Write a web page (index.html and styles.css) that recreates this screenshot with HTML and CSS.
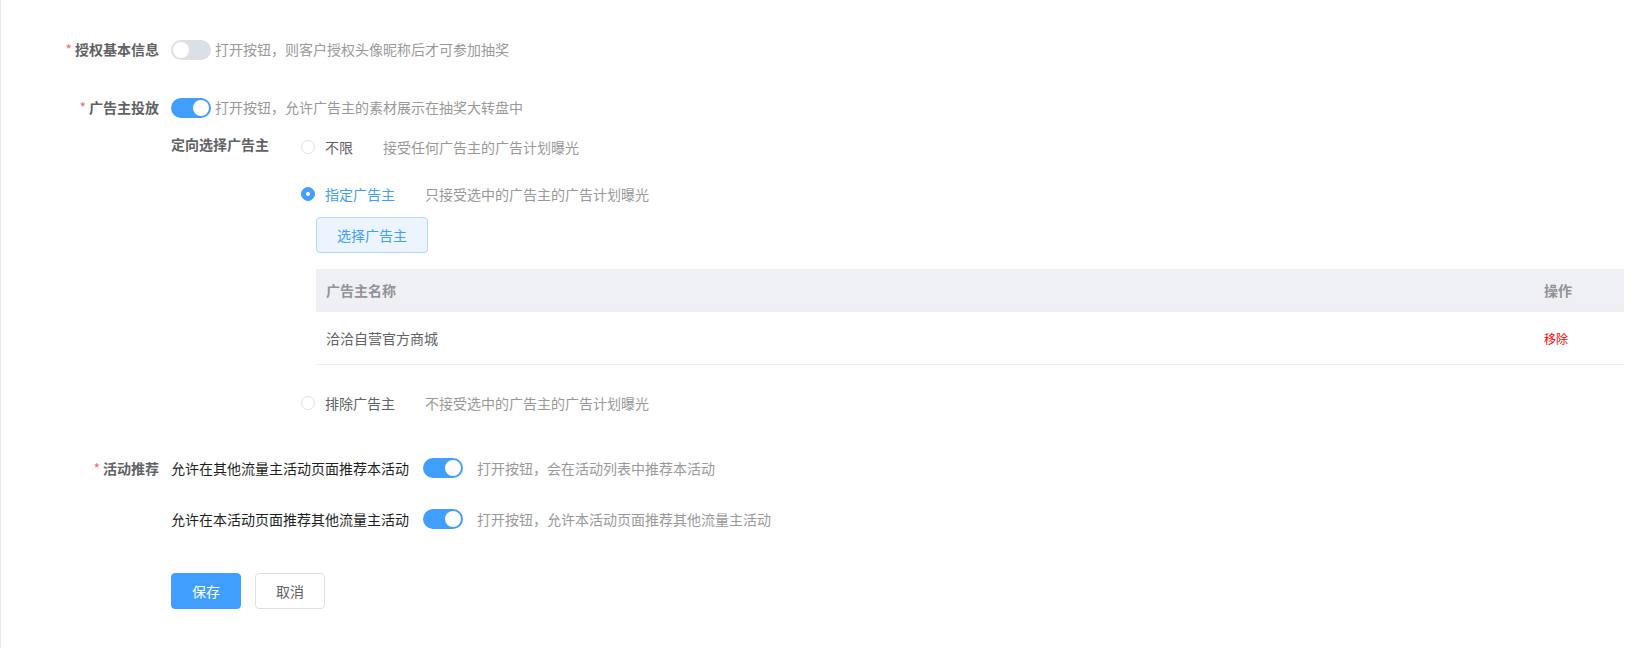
FILE: index.html
```html
<!DOCTYPE html>
<html>
<head>
  <title>活动设置</title>
  <link rel="stylesheet" href="styles.css">
</head>
<body>
  <div class="page">
    <!-- 授权基本信息 -->
    <div class="form-item first">
      <div class="form-label"><span class="required">*</span>授权基本信息</div>
      <div class="form-content">
        <span class="switch"></span><span class="tip tip-near">打开按钮，则客户授权头像昵称后才可参加抽奖</span>
      </div>
    </div>

    <!-- 广告主投放 -->
    <div class="form-item">
      <div class="form-label"><span class="required">*</span>广告主投放</div>
      <div class="form-content">
        <div class="line">
          <span class="switch on"></span><span class="tip tip-near">打开按钮，允许广告主的素材展示在抽奖大转盘中</span>
        </div>
        <div class="sub-item">
          <div class="sub-label">定向选择广告主</div>
          <div class="radio-group">
            <div class="radio-row">
              <span class="radio"></span>
              <span class="radio-text">不限</span>
              <span class="tip tip-far">接受任何广告主的广告计划曝光</span>
            </div>
            <div class="radio-row">
              <span class="radio checked"></span>
              <span class="radio-text active">指定广告主</span>
              <span class="tip tip-far">只接受选中的广告主的广告计划曝光</span>
            </div>
            <div class="picked">
              <button class="btn btn-plain">选择广告主</button>
              <table class="table">
                <thead>
                  <tr>
                    <th>广告主名称</th>
                    <th class="col-action">操作</th>
                  </tr>
                </thead>
                <tbody>
                  <tr>
                    <td>洽洽自营官方商城</td>
                    <td class="col-action"><a class="link-danger">移除</a></td>
                  </tr>
                </tbody>
              </table>
            </div>
            <div class="radio-row last">
              <span class="radio"></span>
              <span class="radio-text">排除广告主</span>
              <span class="tip tip-far">不接受选中的广告主的广告计划曝光</span>
            </div>
          </div>
        </div>
      </div>
    </div>

    <!-- 活动推荐 -->
    <div class="form-item recommend">
      <div class="form-label"><span class="required">*</span>活动推荐</div>
      <div class="form-content">
        <div class="rec-row">
          <span class="rec-text">允许在其他流量主活动页面推荐本活动</span>
          <span class="switch on"></span>
          <span class="tip tip-mid">打开按钮，会在活动列表中推荐本活动</span>
        </div>
        <div class="rec-row">
          <span class="rec-text">允许在本活动页面推荐其他流量主活动</span>
          <span class="switch on"></span>
          <span class="tip tip-mid">打开按钮，允许本活动页面推荐其他流量主活动</span>
        </div>
      </div>
    </div>

    <div class="actions">
      <button class="btn btn-primary">保存</button>
      <button class="btn btn-default">取消</button>
    </div>
  </div>
</body>
</html>
```

FILE: styles.css
```css
/* 活动设置表单 */
body {
  margin: 0;
  padding: 0;
  background: #fff;
  font-family: "Noto Sans CJK SC", "Liberation Sans", sans-serif;
  font-size: 14px;
  color: #606266;
}

.page {
  min-height: 648px;
  box-sizing: border-box;
  border-left: 1px solid #e8e9ee;
  padding: 29px 20px 0 0;
}

.form-item {
  display: flex;
  margin-top: 18px;
}

.form-item.first {
  margin-top: 0;
}

.form-label {
  width: 170px;
  flex-shrink: 0;
  box-sizing: border-box;
  padding-right: 12px;
  text-align: right;
  line-height: 40px;
  font-weight: bold;
  color: #606266;
}

.required {
  color: #f56c6c;
  font-weight: normal;
  margin-right: 3px;
}

.form-content {
  flex: 1;
  line-height: 40px;
}

.line {
  height: 40px;
}

.tip {
  color: #999;
}

.tip-near {
  margin-left: 4px;
}

.tip-far {
  margin-left: 30px;
}

.tip-mid {
  margin-left: 14px;
}

/* 开关 */
.switch {
  display: inline-block;
  position: relative;
  width: 40px;
  height: 20px;
  border-radius: 10px;
  background: #dcdfe6;
  vertical-align: middle;
  margin-top: -2px;
}

.switch::after {
  content: "";
  position: absolute;
  top: 2px;
  left: 2px;
  width: 16px;
  height: 16px;
  border-radius: 50%;
  background: #fff;
}

.switch.on {
  background: #409eff;
}

.switch.on::after {
  left: 22px;
}

/* 定向选择 */
.sub-item {
  display: flex;
  margin-top: 7px;
  line-height: 20px;
}

.sub-label {
  width: 130px;
  flex-shrink: 0;
  font-weight: bold;
  color: #606266;
}

.radio-group {
  flex: 1;
  padding-top: 3px;
}

.radio-row {
  display: flex;
  align-items: center;
  height: 20px;
  margin-bottom: 27px;
}

.radio-row.last {
  margin-top: 28px;
  margin-bottom: 0;
}

.radio {
  width: 14px;
  height: 14px;
  box-sizing: border-box;
  border: 1px solid #dcdfe6;
  border-radius: 50%;
  background: #fff;
  position: relative;
}

.radio.checked {
  border-color: #409eff;
  background: #409eff;
}

.radio.checked::after {
  content: "";
  position: absolute;
  left: 4px;
  top: 4px;
  width: 4px;
  height: 4px;
  border-radius: 50%;
  background: #fff;
}

.radio-text {
  margin-left: 10px;
  color: #606266;
}

.radio-text.active {
  color: #409eff;
}

.picked {
  margin: -14px 0 0 15px;
}

/* 按钮 */
.btn {
  font-family: inherit;
  font-size: 14px;
  line-height: 14px;
  padding: 10px 20px;
  border-radius: 4px;
  border: 1px solid #dcdfe6;
  background: #fff;
  color: #606266;
  cursor: pointer;
}

.btn-plain {
  background: #ecf5ff;
  border-color: #b3d8ff;
  color: #409eff;
}

.btn-primary {
  background: #409eff;
  border-color: #409eff;
  color: #fff;
}

/* 表格 */
.table {
  width: 100%;
  margin-top: 16px;
  border-collapse: collapse;
  table-layout: fixed;
}

.table th {
  height: 42px;
  padding: 0 10px;
  background: #eff0f4;
  color: #909399;
  font-weight: bold;
  text-align: left;
  border-bottom: 1px solid #ebeef5;
}

.table td {
  height: 52px;
  padding: 0 10px;
  color: #606266;
  border-bottom: 1px solid #ebeef5;
}

.table .col-action {
  width: 70px;
}

.link-danger {
  color: #ff0000;
  font-size: 12px;
  cursor: pointer;
}

/* 活动推荐 */
.recommend {
  margin-top: 35px;
}

.rec-row {
  display: flex;
  align-items: center;
  height: 40px;
  margin-bottom: 11px;
}

.rec-row:last-child {
  margin-bottom: 0;
}

.rec-text {
  color: #1f1f1f;
  margin-right: 14px;
}

.rec-row .switch {
  margin-top: 0;
}

.actions {
  margin: 34px 0 0 170px;
  display: flex;
  gap: 14px;
}
```
